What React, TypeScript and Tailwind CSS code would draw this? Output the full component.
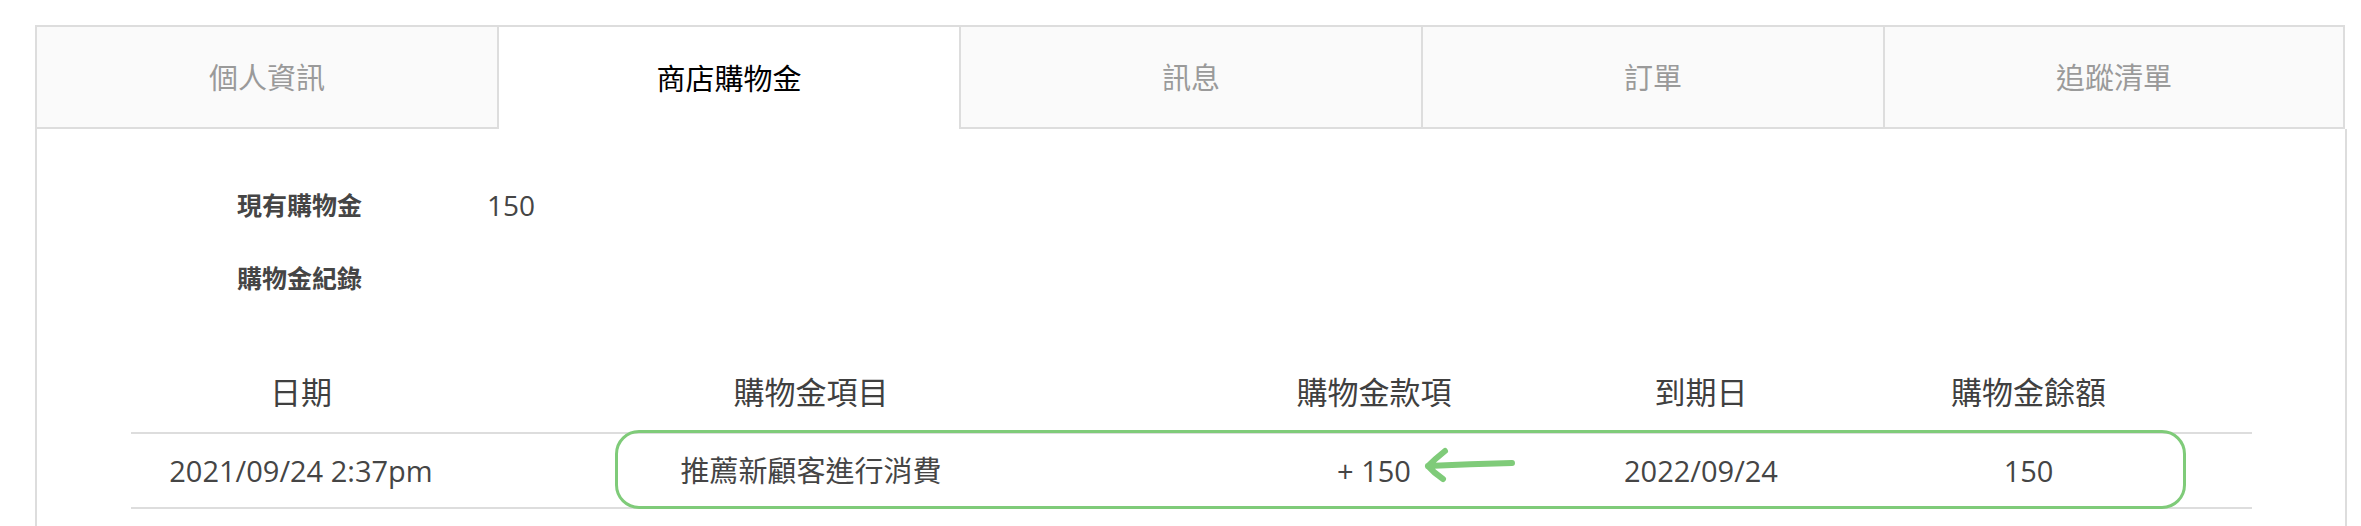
import React from "react";

type Tab = { label: string; active?: boolean };

const tabs: Tab[] = [
    { label: "個人資訊" },
    { label: "商店購物金", active: true },
    { label: "訊息" },
    { label: "訂單" },
    { label: "追蹤清單" },
];

const headers = ["日期", "購物金項目", "購物金款項", "到期日", "購物金餘額"];
const row = ["2021/09/24 2:37pm", "推薦新顧客進行消費", "+ 150", "2022/09/24", "150"];

// Arrow drawn in green pointing at the amount
function HandArrow(): React.JSX.Element {
    return (
        <svg width="100" height="40" viewBox="0 0 100 40" fill="none" aria-hidden="true">
            <path
                d="M92 18 Q50 19 8 21 M25 6 Q15 14 8 21 Q14 28 23 34"
                stroke="#7fcb79"
                strokeWidth="6"
                strokeLinecap="round"
                strokeLinejoin="round"
            />
        </svg>
    );
}

export default function App(): React.JSX.Element {
    return (
        <div className="min-h-[526px] bg-white pt-[25px] pl-[35px] font-['Open_Sans','Noto_Sans_CJK_TC',sans-serif] text-[#454545]">
            <div className="w-[2312px]">
                {/* tabs */}
                <div className="flex">
                    {tabs.map((t, i) => (
                        <div
                            key={t.label}
                            className={
                                "flex h-[104px] w-[462px] items-center justify-center border-t-2 border-l-2 border-[#dddddd] font-['Noto_Sans_CJK_TC',sans-serif] text-[29px] " +
                                (i === tabs.length - 1 ? "border-r-2 " : "") +
                                (t.active ? "bg-white text-black" : "border-b-2 bg-[#fafafa] text-[#9a9a9a]")
                            }
                        >
                            {t.label}
                        </div>
                    ))}
                </div>

                {/* panel */}
                <div className="border-x-2 border-[#dddddd] pt-[58px] pb-[40px]">
                    <div className="flex h-[36px] items-center pl-[200px]">
                        <span className="w-[250px] font-['Noto_Sans_CJK_TC',sans-serif] text-[25px] font-bold">現有購物金</span>
                        <span className="text-[28px]">150</span>
                    </div>
                    <div className="mt-[37px] flex h-[36px] items-center pl-[200px]">
                        <span className="font-['Noto_Sans_CJK_TC',sans-serif] text-[25px] font-bold">購物金紀錄</span>
                    </div>

                    <div className="relative mt-[56px] ml-[94px] w-[2121px] text-[29px]">
                        <div className="grid h-[80px] grid-cols-[340px_680px_446px_208px_447px] items-center text-center text-[31px] text-[#404040]">
                            {headers.map((h) => (
                                <div key={h}>{h}</div>
                            ))}
                        </div>
                        <div className="grid h-[77px] grid-cols-[340px_680px_446px_208px_447px] items-center border-y-2 border-[#dddddd] text-center">
                            {row.map((c) => (
                                <div key={c}>{c}</div>
                            ))}
                        </div>

                        {/* highlight annotation */}
                        <div className="pointer-events-none absolute top-[78px] left-[484px] h-[79px] w-[1571px] rounded-[24px] border-[3px] border-[#7fcb79]" />
                        <div className="pointer-events-none absolute top-[93px] left-[1289px]">
                            <HandArrow />
                        </div>
                    </div>
                </div>
            </div>
        </div>
    );
}
